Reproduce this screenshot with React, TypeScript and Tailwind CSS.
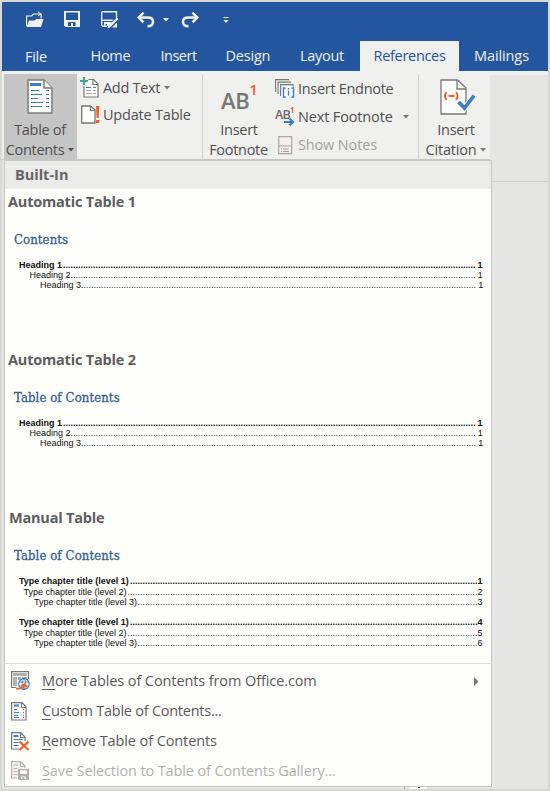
import React from "react";

const CaretDown = ({ className = "" }: { className?: string }) => (
  <svg className={`shrink-0 ${className}`} width="6" height="4" viewBox="0 0 6 4">
    <path d="M0 0h6L3 3.5z" fill="currentColor" />
  </svg>
);

const OpenIcon = () => (
  <svg width="19" height="17" viewBox="0 0 19 17" fill="none">
    <path d="M1.600 15V5h5l2-2h7.500v4.500" stroke="#f0f0ee" strokeWidth="1.200" />
    <path d="M13 .800l3 2.200-3 2" stroke="#f0f0ee" strokeWidth="1" />
    <path d="M1.500 16 4 9.500h5.500L11.500 8H18.500l-2.500 8z" fill="#f0f0ee" />
  </svg>
);

const SaveIcon = () => (
  <svg width="16" height="16" viewBox="0 0 16 16">
    <path
      fillRule="evenodd"
      fill="#f0f0ee"
      d="M0 0h16v16H1.500L0 14.500zM2 1.500v7.500h12V1.500zM4 11v4h3v-3h2v3h2.500v-4z"
    />
  </svg>
);

const SaveAsIcon = () => (
  <svg width="18" height="18" viewBox="0 0 18 18">
    <path d="M.7.7h14.8v6M.7.700V14l1.300 1.300H6M.7 9.200h11" fill="none" stroke="#f0f0ee" strokeWidth="1.4" />
    <path d="M3 11h8L8 15H6v-2H4.500v3L3 15z" fill="#f0f0ee" />
    <path d="m6.500 17.500 1-3 8.500-8 1.500 1.500-8.500 8.500zM11 16.500l5-5v5z" fill="#f0f0ee" />
  </svg>
);

const UndoIcon = ({ className = "" }: { className?: string }) => (
  <svg className={className} width="18" height="16" viewBox="0 0 18 16" fill="none">
    <path d="M2 5.500h8.500c3.500 0 5.500 1.700 5.500 4.200 0 2.600-2 4.500-5.500 4.500" stroke="#f0f0ee" strokeWidth="2.500" />
    <path d="M6.500.700 1.700 5.500l4.800 4.800" stroke="#f0f0ee" strokeWidth="2.500" />
  </svg>
);

const TocIcon = () => (
  <svg width="26" height="35" viewBox="0 0 26 35" fill="none">
    <path d="M1 1h16l8 8v25H1z" fill="#fefefc" stroke="#7b7b7b" strokeWidth="1.500" />
    <path d="M17 1v8h8" fill="#fefefc" stroke="#7b7b7b" strokeWidth="1.500" />
    <path d="M3 4h11v3H3z" fill="#3e7dbf" />
    <path
      d="M4 11.500h8M4 15.500h11M4 19.500h7M4 23.500h12M4 27.500h11M19 11.500h3M19 15.500h3M19 19.500h3M19 23.500h3M19 27.500h3"
      stroke="#3e7dbf"
    />
  </svg>
);

const AddTextIcon = () => (
  <svg width="19" height="21" viewBox="0 0 19 21" fill="none">
    <path d="M4 9v11h14V7l-4.500-4.500H8.500" fill="#fefefc" stroke="#777" strokeWidth="1.200" />
    <path d="M13 2.500V7.500h5" stroke="#777" strokeWidth="1.200" />
    <path d="M6 10.500h5M13 10.500h3" stroke="#3e7dbf" />
    <path d="M6 13.500h5M13 13.500h3M6 16.500h6M13 16.500h3" stroke="#a8a8a8" />
    <path d="M4 0v8M0 4h8" stroke="#40a497" strokeWidth="2.200" />
  </svg>
);

const UpdateIcon = () => (
  <svg width="19" height="19" viewBox="0 0 19 19" fill="none">
    <path d="M.700 1h9L14 5v13H.700z" fill="#fefefc" stroke="#777" strokeWidth="1.300" />
    <path d="M9.500 1v4.500H14" stroke="#777" strokeWidth="1.200" />
    <path d="M15 1h3.300l-.700 12h-2zM15 15h3.300v3H15z" fill="#f95d25" />
  </svg>
);

const EndnoteIcon = () => (
  <svg width="20" height="20" viewBox="0 0 20 20" fill="none">
    <path d="M.600 13V.600H14M3.100 15V3.100H16M5.600 17V5.600H18V9" stroke="#777" strokeWidth="1.100" />
    <path d="M7 7h11v11H7z" fill="#fefefc" />
    <path d="M10.500 9H8.500v9h2M16.500 9h2v9h-2" stroke="#3e7dbf" strokeWidth="1.400" />
    <path d="M13.500 11.500v5M13.500 9v1.500" stroke="#3e7dbf" strokeWidth="1.400" />
  </svg>
);

const NextFootnoteIcon = () => (
  <div className="relative h-5 w-5 font-['Open_Sans',sans-serif]">
    <span className="absolute left-0 top-[2px] text-[12.5px] font-semibold leading-[12px] tracking-[-0.8px] text-[#6c6c6c]">AB</span>
    <span className="absolute left-[15px] top-[-1px] text-[8px] font-bold leading-[8px] text-[#f95d25]">1</span>
    <svg className="absolute left-[9px] top-[11px]" width="11" height="8" viewBox="0 0 11 8" fill="none">
      <path d="M0 4h9M5.500.600 9 4 5.500 7.400" stroke="#3e7dbf" strokeWidth="2.200" />
    </svg>
  </div>
);

const NotesIcon = () => (
  <svg width="15" height="19" viewBox="0 0 15 19" fill="none">
    <path d="M.700.700h13v17H.700zM.700 10h13" fill="#f6eff1" stroke="#aaa4a6" strokeWidth="1.200" />
    <path d="M3 13h1M5 13h6M3 15.500h1M5 15.500h6" stroke="#aaa4a6" />
  </svg>
);

const CitationIcon = () => (
  <svg width="35" height="36" viewBox="0 0 35 36" fill="none">
    <path d="M1 1h16.500L26 9v26H1z" fill="#fefefc" stroke="#777" strokeWidth="1.300" />
    <path d="M17 1v9h9" stroke="#777" strokeWidth="1.300" />
    <path d="M6.500 13q-3 3.800 0 8M16 13q3 3.800 0 8M8.500 17h6" stroke="#f95d25" strokeWidth="1.900" />
    <path d="m18.500 23 6 6.500L34 16.500" stroke="#f4f4f2" strokeWidth="5.500" />
    <path d="m18.500 23 6 6L34 16.500" stroke="#3e7dbf" strokeWidth="3.600" />
  </svg>
);

const OfficeIcon = () => (
  <svg width="20" height="20" viewBox="0 0 20 20" fill="none">
    <path d="M.600 17V.600H17.500V8M.600 16.500H5" stroke="#777" strokeWidth="1.200" />
    <path d="M2 2h14v3H2zM2 6h4v9H2zM7 6h3v3H7zM11 6h5v2h-5z" fill="#b1b1b1" />
    <circle cx="13" cy="13" r="5.300" fill="#fefefc" stroke="#3e7dbf" strokeWidth="1.200" />
    <path d="M8 11h10M8 15h10M13 7.500q-4 5 0 11M13 7.500q4 5 0 11" stroke="#3e7dbf" strokeWidth=".8" />
    <path d="M5 17.500c3 .5 8-.5 8.500-3.500M10.500 15l3-2 2 3" stroke="#f95d25" strokeWidth="1.900" />
  </svg>
);

const CustomIcon = () => (
  <svg width="16" height="19" viewBox="0 0 16 19" fill="none">
    <path d="M.600.600h10.500L15 5v13H.600z" fill="#fefefc" stroke="#777" strokeWidth="1.200" />
    <path d="M10.500.600V5.500H15" stroke="#777" strokeWidth="1.200" />
    <path d="M3 3.500h5" stroke="#3e7dbf" strokeWidth="2" />
    <path d="M3 7.500h3M3 10.500h5M3 13.500h4M3 15.500h5M12 7.500h1M12 10.500h1M12 13.500h1M12 15.500h1" stroke="#3e7dbf" />
  </svg>
);

const RemoveIcon = () => (
  <svg width="19" height="19" viewBox="0 0 19 19" fill="none">
    <path d="M8 17H.600V.600h9L14 5v4" stroke="#777" strokeWidth="1.200" />
    <path d="M9.500.600V5.500H14" stroke="#777" strokeWidth="1.200" />
    <path d="M2.500 4h5" stroke="#3e7dbf" strokeWidth="2" />
    <path d="M2.500 7.500h9M2.500 10.500h5M2.500 13.500h5" stroke="#3e7dbf" />
    <path d="m8.500 9.500 9 8.500M17.500 9.500l-9 8.500" stroke="#f95d25" strokeWidth="2.200" />
  </svg>
);

const SaveSelectionIcon = () => (
  <svg width="19" height="20" viewBox="0 0 19 20" fill="none">
    <path d="M6 17H.600V.600h9L14 5v2" fill="#f6f1f3" stroke="#b5b0b2" strokeWidth="1.200" />
    <path d="M9.500.600V5.500H14M2.500 4h5M2.500 7.500h4M2.500 10.500h4M2.500 13.500h4" stroke="#b5b0b2" />
    <path fillRule="evenodd" fill="#b2aeb0" d="M7 8h11v11H8l-1-1zM9 9.300v3.700h7V9.300zM10 15.500V18h1.500v-2h2v2H15v-2.500z" />
  </svg>
);

const tabs = [
  { name: "File", cls: "w-[70px] pl-[23px] pt-px" },
  { name: "Home", cls: "w-[71px] pl-[18.5px]" },
  { name: "Insert", cls: "w-[65px] pl-[17.5px] tracking-[-0.5px]" },
  { name: "Design", cls: "w-[75px] pl-[17.5px] tracking-[-0.2px]" },
  { name: "Layout", cls: "w-[77px] pl-[17px]" },
  { name: "References", cls: "w-[99px] pl-[13.5px] tracking-[-0.3px] bg-[#f0f0ee] text-[#2456a0]" },
  { name: "Mailings", cls: "pl-[15px] tracking-[-0.1px]" },
];

type Line = { text: string; page: string; indent: string; dots: number; bold?: boolean; h?: string };

const headings: Line[] = [
  { text: "Heading 1", page: "1", indent: "pl-[14px]", dots: 165, bold: true },
  { text: "Heading 2", page: "1", indent: "pl-[24.5px]", dots: 162 },
  { text: "Heading 3", page: "1", indent: "pl-[35px]", dots: 158 },
];

const chapters: Line[] = [
  { text: "Type chapter title (level 1)", page: "1", indent: "pl-[14px]", dots: 139, bold: true, h: "h-[11px]" },
  { text: "Type chapter title (level 2)", page: "2", indent: "pl-[18.5px]", dots: 140 },
  { text: "Type chapter title (level 3)", page: "3", indent: "pl-[29px]", dots: 136, h: "h-[20px]" },
  { text: "Type chapter title (level 1)", page: "4", indent: "pl-[14px]", dots: 139, bold: true, h: "h-[11px]" },
  { text: "Type chapter title (level 2)", page: "5", indent: "pl-[18.5px]", dots: 140 },
  { text: "Type chapter title (level 3)", page: "6", indent: "pl-[29px]", dots: 136 },
];

function TocLine({ line, gap }: { line: Line; gap: string }) {
  return (
    <div
      className={`flex justify-between pr-[8.5px] font-['Liberation_Sans',sans-serif] text-[9px] leading-[10px] tracking-[0px] text-[#111] ${line.h ?? "h-[10px]"} ${line.indent} ${line.bold ? "font-bold" : ""}`}
    >
      <span className="shrink-0 whitespace-nowrap">{line.text}</span>
      <span className={`ml-auto whitespace-nowrap ${line.bold ? "" : "text-[#333]"}`}>{".".repeat(line.dots)}</span>
      <span className={`shrink-0 ${gap}`}>{line.page}</span>
    </div>
  );
}

function GalleryItem({ title, heading, lines, gap, shift = "" }: { title: string; heading: string; lines: Line[]; gap: string; shift?: string }) {
  return (
    <section className="h-[158px]">
      <h2 className={`pl-[3px] pt-[3px] text-[14.5px] font-bold leading-[20px] tracking-[-0.2px] text-[#5e5e5e] ${shift}`}>{title}</h2>
      <h3 className="mb-[11px] mt-[19px] pl-[9px] font-['DejaVu_Serif_Condensed','DejaVu_Serif',serif] text-[13px] font-normal leading-[18px] tracking-[0.1px] text-[#365f91] [-webkit-text-stroke:0.3px_#365f91] [font-stretch:condensed]">
        {heading}
      </h3>
      {lines.map((l, i) => (
        <TocLine key={i} line={l} gap={gap} />
      ))}
    </section>
  );
}

function MenuRow({ icon, label, disabled, arrow, track = "tracking-[-0.1px]" }: { icon: React.ReactNode; label: string; disabled?: boolean; arrow?: boolean; track?: string }) {
  return (
    <div className={`flex h-[30px] items-center pl-[6px] pr-[12px] text-[14.5px] ${track} ${disabled ? "text-[#b1b1b1]" : "text-[#5a5a5a]"}`}>
      <span className="flex w-[31px] shrink-0">{icon}</span>
      <span className="flex-1 whitespace-nowrap leading-5">
        <span className="underline underline-offset-[3px]">{label[0]}</span>
        {label.slice(1)}
      </span>
      {arrow && (
        <svg width="5" height="9" viewBox="0 0 5 9">
          <path d="M0 0v9l4.500-4.500z" fill="#777" />
        </svg>
      )}
    </div>
  );
}

export default function App() {
  return (
    <div className="flex h-[791px] w-[550px] flex-col overflow-hidden border-2 border-[#d8d8d5] bg-[#e5e5e4] font-['Open_Sans','Noto_Sans',sans-serif] text-[14.5px] tracking-[-0.3px] text-[#505050]">
      <header className="h-[69px] shrink-0 bg-[#2456a0] text-[#f0f0ee]">
        <div className="flex h-[39px] items-start pl-[23px] pt-[9px]">
          <div className="w-[39px]"><OpenIcon /></div>
          <div className="w-[37px]"><SaveIcon /></div>
          <div className="w-[36px]"><SaveAsIcon /></div>
          <div className="flex w-[44px] gap-[8px] pt-px"><UndoIcon /><CaretDown className="mt-[6px]" /></div>
          <div className="w-[42px] pt-px"><UndoIcon className="-scale-x-100" /></div>
          <svg className="mt-[6px]" width="6" height="7" viewBox="0 0 6 7"><path d="M.500 0h5v1h-5zM.500 3h5L3 6z" fill="#f0f0ee" /></svg>
        </div>
        <nav className="flex h-[30px] leading-[30px]">
          {tabs.map((t) => (
            <div key={t.name} className={`h-[30px] shrink-0 ${t.cls}`}>{t.name}</div>
          ))}
        </nav>
      </header>

      <div className="flex h-[89px] shrink-0">
        <div className="flex w-[488px] border-b border-[#c6c6c6] bg-[#f0f0ef] pl-[2px] pt-[3px]">
          <div className="flex h-[86px] w-[73px] shrink-0 flex-col items-center bg-[#c5c5c5] pr-px pt-[5px] leading-[20px]">
            <TocIcon />
            <span className="mt-[6px]">Table of</span>
            <span className="flex items-center gap-1 whitespace-nowrap">Contents<CaretDown /></span>
          </div>
          <div className="w-[126px] shrink-0 border-r border-[#d0d0d0] pl-[3px] leading-[27px]">
            <div className="flex h-[27px] items-center">
              <span className="w-[23px]"><AddTextIcon /></span>Add Text<CaretDown className="ml-1 text-[#777]" />
            </div>
            <div className="flex h-[27px] items-center pl-px tracking-[-0.2px]">
              <span className="w-[22px]"><UpdateIcon /></span>Update Table
            </div>
          </div>
          <div className="flex w-[71px] shrink-0 flex-col items-center leading-[20px]">
            <div className="flex h-[46px] w-[35px] shrink-0 pt-[8px]">
              <span className="pt-px text-[22px] font-semibold leading-[34px] tracking-[-0.4px] text-[#777]">AB</span>
              <span className="text-[15px] font-semibold leading-[15px] text-[#f95d25]">1</span>
            </div>
            <span className="shrink-0 pl-px">Insert</span>
            <span className="shrink-0">Footnote</span>
          </div>
          <div className="w-[145px] shrink-0 border-r border-[#d0d0d0] pt-px leading-[28px]">
            <div className="flex h-[28px] items-center"><span className="w-[24px] pl-px"><EndnoteIcon /></span>Insert Endnote</div>
            <div className="flex h-[28px] items-center tracking-[-0.15px]"><span className="w-[24px] pl-px"><NextFootnoteIcon /></span>Next Footnote<CaretDown className="ml-[10px] text-[#777]" /></div>
            <div className="flex h-[28px] items-center tracking-[-0.15px] text-[#a2a2a2]"><span className="w-[24px] pl-[4px]"><NotesIcon /></span>Show Notes</div>
          </div>
          <div className="flex flex-1 flex-col items-center pl-[3px] pt-[5px] leading-[20px]">
            <div className="pl-[2px]"><CitationIcon /></div>
            <span className="mt-[5px]">Insert</span>
            <span className="flex items-center gap-1 whitespace-nowrap tracking-[-0.2px]">Citation<CaretDown className="text-[#777]" /></span>
          </div>
        </div>
        <div className="flex-1 border-t-4 border-[#f0f0ef]" />
      </div>

      <main className="flex h-[627px] shrink-0">
        <div className="w-[2px] bg-[#e5e5e4]" />
        <div className="flex w-[488px] flex-col border border-[#c5c5c5] bg-[#fefefb]">
          <div className="h-[28px] shrink-0 bg-[#ebebe8] pl-[10px] text-[14.5px] font-bold leading-[27px] tracking-[0px] text-[#656565]">Built-In</div>
          <GalleryItem title="Automatic Table 1" heading="Contents" lines={headings} gap="pl-[2px]" />
          <GalleryItem title="Automatic Table 2" heading="Table of Contents" lines={headings} gap="pl-[2px]" />
          <GalleryItem title="Manual Table" heading="Table of Contents" lines={chapters} gap="" shift="ml-px" />
          <div className="mb-[2px] h-px shrink-0 bg-[#dededf]" />
          <MenuRow icon={<OfficeIcon />} label="More Tables of Contents from Office.com" arrow />
          <MenuRow icon={<CustomIcon />} label="Custom Table of Contents..." track="tracking-[-0.25px]" />
          <MenuRow icon={<RemoveIcon />} label="Remove Table of Contents" />
          <MenuRow icon={<SaveSelectionIcon />} label="Save Selection to Table of Contents Gallery..." disabled track="tracking-[-0.12px]" />
        </div>
        <div className="flex-1">
          <div className="h-[22px] border-b border-[#cecece]" />
        </div>
      </main>
      <div className="flex h-[2px] pl-[402px]">
        <div className="w-px bg-[#aaa]" />
        <div className="ml-[5px] flex w-[17px] justify-center bg-white"><div className="h-px w-[2px] bg-[#333]" /></div>
      </div>
    </div>
  );
}
